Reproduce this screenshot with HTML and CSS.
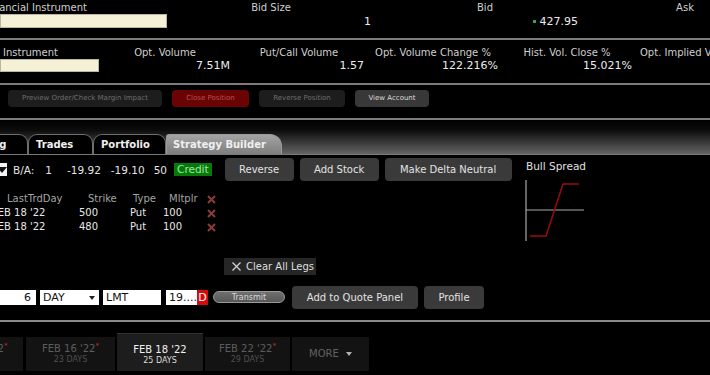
FILE: index.html
```html
<!DOCTYPE html>
<html lang="en">

<head>
  <meta charset="UTF-8">
  <meta name="viewport" content="width=device-width, initial-scale=1.0">
  <title>Order Entry - Strategy Builder</title>
  <link rel="stylesheet" href="styles.css">
</head>

<body>
  <div class="screen">

    <!-- quote line -->
    <div class="quote quote-top">
      <div class="cell cell-inst">
        <div class="label label-cut">Financial Instrument</div>
        <div class="field field-wide"></div>
      </div>
      <div class="cell cell-bidsize">
        <div class="label">Bid Size</div>
        <div class="value">1</div>
      </div>
      <div class="cell cell-bid">
        <div class="label">Bid</div>
        <div class="value"><span class="tick"></span>427.95</div>
      </div>
      <div class="cell cell-ask">
        <div class="label">Ask</div>
        <div class="value"></div>
      </div>
    </div>

    <!-- option statistics -->
    <div class="quote quote-mid">
      <div class="cell cell-inst2">
        <div class="label label-left">Instrument</div>
        <div class="field field-short"></div>
      </div>
      <div class="cell stat">
        <div class="label">Opt. Volume</div>
        <div class="value">7.51M</div>
      </div>
      <div class="cell stat">
        <div class="label">Put/Call Volume</div>
        <div class="value">1.57</div>
      </div>
      <div class="cell stat">
        <div class="label">Opt. Volume Change %</div>
        <div class="value">122.216%</div>
      </div>
      <div class="cell stat">
        <div class="label">Hist. Vol. Close %</div>
        <div class="value">15.021%</div>
      </div>
      <div class="cell stat stat-last">
        <div class="label label-left">Opt. Implied Vol. %</div>
        <div class="value"></div>
      </div>
    </div>

    <div class="actions">
      <div class="act act-dim act-preview">Preview Order/Check Margin Impact</div>
      <div class="act act-close">Close Position</div>
      <div class="act act-dim act-reverse">Reverse Position</div>
      <div class="act act-account">View Account</div>
    </div>

    <!-- panel tabs -->
    <div class="tabbar">
      <div class="tab tab-cut">Orders/Log</div>
      <div class="tab tab-trades">Trades</div>
      <div class="tab tab-portfolio">Portfolio</div>
      <div class="tab tab-active">Strategy Builder</div>
    </div>

    <div class="builder">
      <div class="builder-top">
        <div class="legs-panel">
          <div class="strategy-bar">
            <span class="combo-drop"><span class="combo-arrow"></span></span>
            <span class="ba-label">B/A:</span>
            <span class="ba-size">1</span>
            <span class="ba-bid">-19.92</span>
            <span class="ba-ask">-19.10</span>
            <span class="ba-size2">50</span>
            <span class="credit">Credit</span>
            <div class="btn btn-reverse">Reverse</div>
            <div class="btn btn-stock">Add Stock</div>
            <div class="btn btn-delta">Make Delta Neutral</div>
          </div>

          <div class="legs">
            <div class="leg leg-head">
              <span class="c-date">LastTrdDay</span>
              <span class="c-strike">Strike</span>
              <span class="c-type">Type</span>
              <span class="c-mult">Mltplr</span>
              <span class="c-del"><svg width="9" height="9" viewBox="0 0 9 9"><path d="M1 1L8 8M8 1L1 8" stroke="#8c3b39" stroke-width="2"/></svg></span>
            </div>
            <div class="leg">
              <span class="c-date">FEB 18 '22</span>
              <span class="c-strike">500</span>
              <span class="c-type">Put</span>
              <span class="c-mult">100</span>
              <span class="c-del"><svg width="9" height="9" viewBox="0 0 9 9"><path d="M1 1L8 8M8 1L1 8" stroke="#8c3b39" stroke-width="2"/></svg></span>
            </div>
            <div class="leg">
              <span class="c-date">FEB 18 '22</span>
              <span class="c-strike">480</span>
              <span class="c-type">Put</span>
              <span class="c-mult">100</span>
              <span class="c-del"><svg width="9" height="9" viewBox="0 0 9 9"><path d="M1 1L8 8M8 1L1 8" stroke="#8c3b39" stroke-width="2"/></svg></span>
            </div>
          </div>
        </div>

        <div class="profile-panel">
          <div class="profile-name">Bull Spread</div>
          <svg class="payoff" width="62" height="64" viewBox="0 0 62 64">
            <line x1="1" y1="1" x2="1" y2="62" stroke="#a9a9a9" stroke-width="1.2" />
            <line x1="1" y1="31" x2="59" y2="31" stroke="#a9a9a9" stroke-width="1.2" />
            <polyline points="5,57 21,57 38,5 54,5" fill="none" stroke="#9a0c0c" stroke-width="1.5" />
          </svg>
        </div>
      </div>

      <div class="clear-row">
        <div class="clear-legs">
          <svg width="9" height="9" viewBox="0 0 9 9"><path d="M0.5 0.5L8.5 8.5M8.5 0.5L0.5 8.5" stroke="#d6d6d6" stroke-width="1.2"/></svg>
          Clear All Legs
        </div>
      </div>

      <div class="order-row">
        <div class="inp inp-qty">6</div>
        <div class="inp inp-tif">DAY<span class="drop-tri"></span></div>
        <div class="inp inp-type">LMT</div>
        <div class="inp inp-price">19....<span class="dest">D</span></div>
        <div class="transmit">Transmit</div>
        <div class="btn btn-quote">Add to Quote Panel</div>
        <div class="btn btn-profile">Profile</div>
      </div>
    </div>

    <!-- expiries -->
    <div class="expiries">
      <div class="exp exp-cut">
        <div class="exp-date">FEB 14 '22<span class="star">*</span></div>
        <div class="exp-days">21 DAYS</div>
      </div>
      <div class="exp exp-w89">
        <div class="exp-date">FEB 16 '22<span class="star">*</span></div>
        <div class="exp-days">23 DAYS</div>
      </div>
      <div class="exp exp-active">
        <div class="exp-date">FEB 18 '22</div>
        <div class="exp-days">25 DAYS</div>
      </div>
      <div class="exp exp-w85">
        <div class="exp-date">FEB 22 '22<span class="star">*</span></div>
        <div class="exp-days">29 DAYS</div>
      </div>
      <div class="exp exp-more">MORE<span class="more-tri"></span></div>
    </div>

  </div>
</body>

</html>
```

FILE: styles.css
```css
body {
  margin: 0;
  background: #000;
  font-family: "DejaVu Sans", Verdana, sans-serif;
  color: #e6e6e6;
}

.screen {
  width: 710px;
  height: 375px;
  overflow: hidden;
  background: #000;
}

/* quote rows */
.quote {
  display: flex;
  white-space: nowrap;
  border-bottom: 2px solid #7c7c7c;
}

.quote-top {
  height: 38px;
}

.quote-mid {
  height: 37px;
  padding-top: 6px;
}

.cell {
  flex: none;
}

.label {
  font-size: 10px;
  line-height: 14px;
  color: #cfcfcf;
  text-align: center;
}

.quote-top .label {
  line-height: 15px;
}

.quote-mid .label {
  line-height: 13px;
}

.label-cut {
  text-align: left;
  margin-left: -15px;
}

.label-left {
  text-align: left;
  padding-left: 3px;
}

.value {
  font-size: 11px;
  line-height: 14px;
  color: #ececec;
  text-align: right;
  height: 14px;
}

.quote-mid .value {
  line-height: 13px;
  height: 13px;
}

.field {
  background: #f4f1d6;
  border: 1px solid #b9b7a4;
  box-sizing: border-box;
}

.field-wide {
  width: 167px;
  height: 14px;
  margin-top: -1px;
}

.field-short {
  width: 99px;
  height: 13px;
}

.cell-inst {
  width: 170px;
}

.cell-bidsize {
  width: 202px;
}

.cell-bidsize .value {
  padding-right: 1px;
}

.cell-bid {
  width: 226px;
}

.cell-bid .value {
  padding-right: 20px;
}

.cell-ask {
  width: 174px;
}

.tick {
  display: inline-block;
  width: 3px;
  height: 3px;
  background: #3aa64a;
  vertical-align: middle;
  margin-right: 4px;
  margin-bottom: 2px;
}

.cell-inst2 {
  width: 98px;
}

.stat {
  width: 134px;
}

.stat .value {
  padding-right: 2px;
}

.stat-last {
  width: 160px;
}

.stat-last .label {
  padding-left: 6px;
}

/* action buttons */
.actions {
  display: flex;
  gap: 10px;
  height: 35px;
  padding: 5px 0 0 8px;
  box-sizing: border-box;
  border-bottom: 2px solid #7c7c7c;
}

.act {
  height: 17px;
  line-height: 17px;
  font-size: 7px;
  text-align: center;
  border-radius: 4px;
  white-space: nowrap;
}

.act-dim {
  background: #1d1d1d;
  color: #6e6e6e;
}

.act-preview {
  width: 154px;
}

.act-close {
  width: 77px;
  background: #6c0303;
  color: #b25454;
}

.act-reverse {
  width: 86px;
}

.act-account {
  width: 74px;
  background: #383838;
  color: #dcdcdc;
}

/* tab bar */
.tabbar {
  display: flex;
  align-items: flex-end;
  height: 35px;
  background: linear-gradient(#000 0%, #0c0c0c 30%, #646464 100%);
  border-bottom: 1px solid #7a7a7a;
  box-sizing: border-box;
}

.tab {
  height: 20px;
  line-height: 19px;
  font-size: 10px;
  font-weight: bold;
  color: #f0f0f0;
  background: #000;
  border: 1px solid #6e6e6e;
  border-bottom: none;
  border-radius: 9px 9px 0 0;
  box-sizing: border-box;
  white-space: nowrap;
  padding-left: 7px;
}

.tab-cut {
  width: 92px;
  margin-left: -64px;
}

.tab-trades {
  width: 65px;
}

.tab-portfolio {
  width: 73px;
}

.tab-active {
  width: 116px;
  padding-left: 6px;
  background: linear-gradient(#a3a3a3, #7e7e7e);
  border-color: #9a9a9a;
  border-radius: 3px 12px 0 0;
}

/* strategy builder */
.builder-top {
  display: flex;
  height: 87px;
}

.legs-panel {
  width: 520px;
}

.strategy-bar {
  display: flex;
  align-items: center;
  height: 23px;
  margin-top: 3px;
  font-size: 10.5px;
  color: #e4e4e4;
  white-space: nowrap;
}

.combo-drop {
  position: relative;
  width: 7px;
  height: 13px;
  background: #f2f2f2;
  overflow: hidden;
  margin-left: 0;
}

.combo-arrow {
  position: absolute;
  left: -3px;
  top: 4px;
  border-left: 5px solid transparent;
  border-right: 5px solid transparent;
  border-top: 6px solid #111;
}

.ba-label {
  margin-left: 6px;
}

.ba-size {
  margin-left: 11px;
}

.ba-bid {
  margin-left: 15px;
}

.ba-ask {
  margin-left: 10px;
}

.ba-size2 {
  margin-left: 9px;
}

.credit {
  margin-left: 7px;
  background: #07790a;
  color: #9fe69f;
  height: 13px;
  line-height: 13px;
  padding: 0 3px;
}

.btn {
  height: 23px;
  line-height: 23px;
  background: #3a3a3a;
  color: #e2e2e2;
  font-size: 10px;
  text-align: center;
  border-radius: 4px;
  white-space: nowrap;
}

.btn-reverse {
  width: 69px;
  margin-left: 13px;
}

.btn-stock {
  width: 79px;
  margin-left: 6px;
}

.btn-delta {
  width: 127px;
  margin-left: 6px;
}

.legs {
  margin-top: 11px;
  font-size: 10px;
}

.leg {
  display: grid;
  grid-template-columns: 79px 51px 33px 44px 12px;
  line-height: 14px;
  height: 14px;
  color: #e8e8e8;
  white-space: nowrap;
}

.leg .c-date {
  margin-left: -8px;
}

.leg-head {
  color: #a4a4a4;
}

.leg-head .c-date {
  margin-left: 7px;
}

.leg-head .c-strike {
  padding-left: 9px;
}

.leg-head .c-type {
  padding-left: 3px;
}

.leg-head .c-mult {
  padding-left: 6px;
}

.c-del svg {
  display: block;
  margin-top: 3px;
}

.profile-panel {
  padding-left: 6px;
}

.profile-name {
  margin-top: 4px;
  font-size: 10.5px;
  line-height: 14px;
  color: #e0e0e0;
}

.payoff {
  display: block;
  margin-top: 6px;
  margin-left: -1px;
}

.clear-row {
  padding: 16px 0 0 224px;
}

.clear-legs {
  display: flex;
  align-items: center;
  gap: 5px;
  width: 92px;
  height: 17px;
  padding-left: 8px;
  box-sizing: border-box;
  background: #262626;
  color: #dedede;
  font-size: 10px;
  white-space: nowrap;
}

/* order line */
.order-row {
  display: flex;
  align-items: center;
  height: 22px;
  margin-top: 11px;
}

.inp {
  position: relative;
  height: 15px;
  line-height: 15px;
  background: #fff;
  color: #111;
  font-size: 11px;
  box-sizing: border-box;
  white-space: nowrap;
}

.inp-qty {
  width: 36px;
  text-align: right;
  padding-right: 5px;
}

.inp-tif {
  width: 59px;
  margin-left: 4px;
  padding-left: 3px;
}

.drop-tri {
  position: absolute;
  right: 4px;
  top: 6px;
  border-left: 3px solid transparent;
  border-right: 3px solid transparent;
  border-top: 4px solid #222;
}

.inp-type {
  width: 58px;
  margin-left: 4px;
  padding-left: 3px;
}

.inp-price {
  width: 42px;
  margin-left: 5px;
  padding-left: 3px;
}

.dest {
  position: absolute;
  right: 0;
  top: 0;
  width: 11px;
  height: 15px;
  background: #d20c0c;
  color: #fff;
  text-align: center;
}

.transmit {
  width: 72px;
  height: 12px;
  line-height: 11px;
  margin-left: 5px;
  box-sizing: border-box;
  border: 1px solid #9a9a9a;
  border-radius: 6px;
  background: linear-gradient(#707070, #575757);
  color: #d8d8d8;
  font-size: 8px;
  text-align: center;
}

.btn-quote {
  width: 126px;
  margin-left: 7px;
}

.btn-profile {
  width: 60px;
  margin-left: 6px;
}

/* expiry strip */
.expiries {
  display: flex;
  align-items: flex-end;
  gap: 2px;
  margin-top: 12px;
  padding-top: 11px;
  border-top: 2px solid #8a8a8a;
  height: 38px;
}

.exp {
  height: 34px;
  padding-top: 5px;
  box-sizing: border-box;
  background: #131313;
  text-align: center;
  white-space: nowrap;
}

.exp-date {
  font-size: 10px;
  line-height: 13px;
  color: #5d5d5d;
}

.exp-days {
  font-size: 8px;
  line-height: 10px;
  color: #4f4f4f;
}

.star {
  font-size: 7px;
  color: #c03030;
  vertical-align: top;
  line-height: 9px;
}

.exp-cut {
  width: 88px;
  margin-left: -65px;
  margin-right: 1px;
}

.exp-w89 {
  width: 89px;
}

.exp-w85 {
  width: 85px;
}

.exp-active {
  width: 86px;
  height: 38px;
  padding-top: 9px;
  background: #1d1d1d;
  border-top: 1px solid #303030;
}

.exp-active .exp-date {
  color: #f2f2f2;
}

.exp-active .exp-days {
  color: #dcdcdc;
}

.exp-more {
  width: 77px;
  padding-top: 0;
  line-height: 34px;
  font-size: 10px;
  color: #626262;
}

.more-tri {
  display: inline-block;
  margin-left: 7px;
  vertical-align: middle;
  border-left: 3px solid transparent;
  border-right: 3px solid transparent;
  border-top: 4px solid #b0b0b0;
}
```
